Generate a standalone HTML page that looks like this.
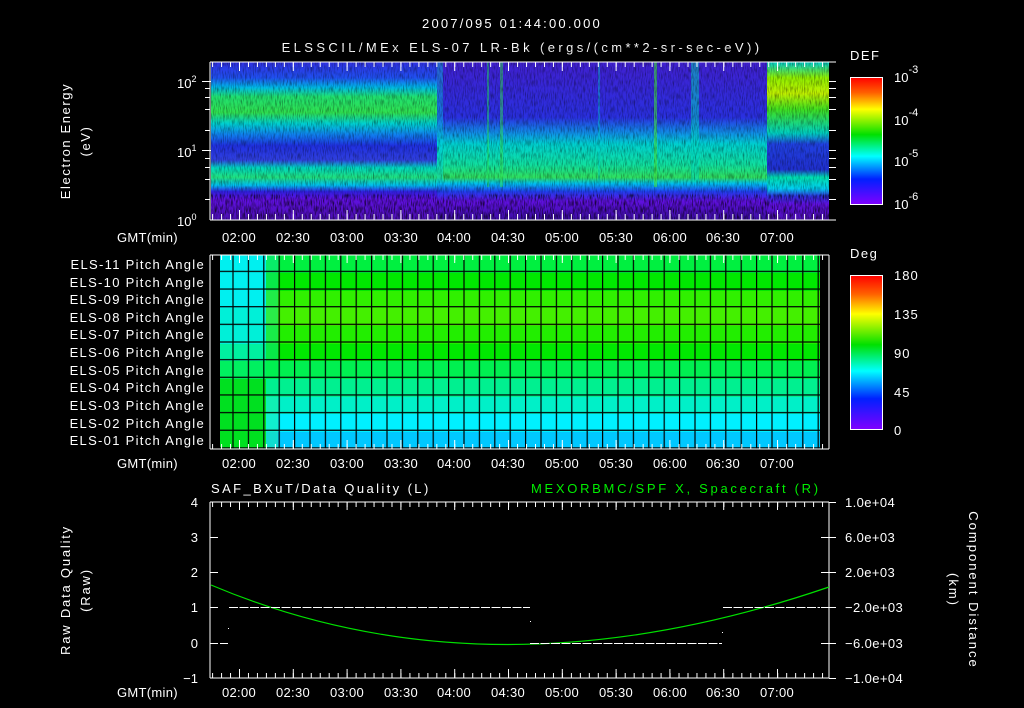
<!DOCTYPE html>
<html><head><meta charset="utf-8"><style>
html,body{margin:0;padding:0;background:#000;}
svg{display:block;}
text{font-family:"Liberation Sans",sans-serif;fill:#fff;font-size:13px;}
.t{font-size:14px;letter-spacing:0.3px;}
.pl{font-size:13px;letter-spacing:1.3px;}
</style></head><body>
<svg width="1024" height="708" viewBox="0 0 1024 708" xmlns="http://www.w3.org/2000/svg">
<defs>
<linearGradient id="gA" x1="0" y1="0" x2="0" y2="1">
<stop offset="0" stop-color="#3030e0"/><stop offset="0.1" stop-color="#2050f0"/>
<stop offset="0.16" stop-color="#00b8e8"/><stop offset="0.22" stop-color="#20e070"/>
<stop offset="0.32" stop-color="#30e050"/><stop offset="0.39" stop-color="#00d0d0"/>
<stop offset="0.46" stop-color="#1080f0"/><stop offset="0.53" stop-color="#2030e0"/>
<stop offset="0.62" stop-color="#3040e0"/><stop offset="0.67" stop-color="#00d8c0"/>
<stop offset="0.73" stop-color="#20e080"/><stop offset="0.78" stop-color="#00c0f0"/>
<stop offset="0.82" stop-color="#3020e0"/><stop offset="0.87" stop-color="#6010e0"/>
<stop offset="1" stop-color="#4a10b0"/></linearGradient>
<linearGradient id="gB" x1="0" y1="0" x2="0" y2="1">
<stop offset="0" stop-color="#4020d0"/><stop offset="0.35" stop-color="#2a30e0"/>
<stop offset="0.45" stop-color="#1090e8"/><stop offset="0.52" stop-color="#00d0d0"/>
<stop offset="0.65" stop-color="#10e0a0"/><stop offset="0.73" stop-color="#30e060"/>
<stop offset="0.77" stop-color="#00c0f0"/><stop offset="0.82" stop-color="#2040f0"/>
<stop offset="0.88" stop-color="#6010e0"/><stop offset="1" stop-color="#3a0ea0"/></linearGradient>
<linearGradient id="gC" x1="0" y1="0" x2="0" y2="1">
<stop offset="0" stop-color="#00d0d0"/><stop offset="0.1" stop-color="#90f000"/>
<stop offset="0.2" stop-color="#c0f000"/><stop offset="0.3" stop-color="#40e020"/>
<stop offset="0.45" stop-color="#00d0c0"/><stop offset="0.52" stop-color="#2040e0"/>
<stop offset="0.68" stop-color="#2030d0"/><stop offset="0.73" stop-color="#00e0b0"/>
<stop offset="0.8" stop-color="#00d0f0"/><stop offset="0.85" stop-color="#3030e0"/>
<stop offset="0.9" stop-color="#6010e0"/><stop offset="1" stop-color="#4a10b0"/></linearGradient>
<linearGradient id="rb" x1="0" y1="0" x2="0" y2="1">
<stop offset="0" stop-color="#ff0000"/><stop offset="0.12" stop-color="#ff6000"/>
<stop offset="0.25" stop-color="#ffff00"/><stop offset="0.45" stop-color="#00e000"/>
<stop offset="0.62" stop-color="#00ffff"/><stop offset="0.8" stop-color="#0020ff"/>
<stop offset="1" stop-color="#8000ff"/></linearGradient>
<pattern id="minT" x="239" y="0" width="8.97" height="708" patternUnits="userSpaceOnUse"><rect x="0" y="0" width="1" height="708" fill="#fff"/></pattern>
<pattern id="majT" x="239" y="0" width="53.8" height="708" patternUnits="userSpaceOnUse"><rect x="0" y="0" width="1" height="708" fill="#fff"/></pattern>
<pattern id="grid" x="220" y="255" width="15.4" height="17.65" patternUnits="userSpaceOnUse"><rect x="12.4" y="0" width="1.2" height="17.65" fill="#000"/><rect x="0" y="15.8" width="15.4" height="1.2" fill="#000"/></pattern>
<filter id="noise"><feTurbulence type="fractalNoise" baseFrequency="0.9 0.15" numOctaves="2" seed="3"/><feColorMatrix values="0 0 0 0 0  0 0 0 0 0  0 0 0 0 0  0 0 0 -2.2 1.25"/></filter>
</defs>

<text x="512" y="28" text-anchor="middle" font-size="16" letter-spacing="2.2">2007/095 01:44:00.000</text>
<text x="522" y="52" text-anchor="middle" font-size="16" letter-spacing="3.4">ELSSCIL/MEx ELS-07 LR-Bk  (ergs/(cm**2-sr-sec-eV))</text>

<!-- Panel 1 -->
<rect x="211" y="62" width="226" height="158" fill="url(#gA)"/>
<rect x="437" y="62" width="330" height="158" fill="url(#gB)"/>
<rect x="767" y="62" width="62" height="158" fill="url(#gC)"/>
<rect x="437" y="62" width="6" height="120" fill="#00d0e0" opacity="0.4"/>
<rect x="487" y="62" width="2" height="125" fill="#20e060" opacity="0.5"/>
<rect x="500" y="62" width="3" height="125" fill="#30e050" opacity="0.5"/>
<rect x="598" y="62" width="2" height="120" fill="#00d0d0" opacity="0.4"/>
<rect x="654" y="62" width="3" height="125" fill="#40e040" opacity="0.6"/>
<rect x="691" y="62" width="8" height="120" fill="#00d8c0" opacity="0.5"/>
<rect x="211" y="62" width="618" height="158" filter="url(#noise)" opacity="0.45"/>
<rect x="211" y="197" width="618" height="23" filter="url(#noise)" opacity="0.6"/>
<rect x="210" y="61.5" width="626" height="1" fill="#fff"/>
<rect x="210" y="219.5" width="626" height="1" fill="#fff"/>
<rect x="209.5" y="62" width="1" height="158" fill="#fff"/>
<rect x="211" y="62" width="618" height="5" fill="url(#minT)"/>
<rect x="211" y="62" width="618" height="9" fill="url(#majT)"/>
<rect x="211" y="214" width="618" height="6" fill="url(#minT)"/>
<rect x="211" y="210" width="618" height="10" fill="url(#majT)"/>
<g fill="#fff">
<rect x="202" y="81" width="9" height="1"/><rect x="202" y="150" width="9" height="1"/>
<rect x="205" y="88" width="5" height="1"/><rect x="205" y="97" width="5" height="1"/><rect x="205" y="109" width="5" height="1"/><rect x="205" y="130" width="5" height="1"/>
<rect x="205" y="158" width="5" height="1"/><rect x="205" y="167" width="5" height="1"/><rect x="205" y="179" width="5" height="1"/><rect x="205" y="199" width="5" height="1"/>
<rect x="829" y="81" width="7" height="1"/><rect x="829" y="88" width="7" height="1"/><rect x="829" y="97" width="7" height="1"/><rect x="829" y="109" width="7" height="1"/><rect x="829" y="130" width="7" height="1"/>
<rect x="829" y="150" width="7" height="1"/><rect x="829" y="158" width="7" height="1"/><rect x="829" y="167" width="7" height="1"/><rect x="829" y="179" width="7" height="1"/><rect x="829" y="199" width="7" height="1"/>
</g>
<text x="177" y="88" font-size="14">10<tspan font-size="9" dy="-6">2</tspan></text>
<text x="177" y="157" font-size="14">10<tspan font-size="9" dy="-6">1</tspan></text>
<text x="177" y="226" font-size="14">10<tspan font-size="9" dy="-6">0</tspan></text>
<text transform="translate(70,141) rotate(-90)" text-anchor="middle" font-size="14" letter-spacing="1.6">Electron Energy</text>
<text transform="translate(90,141) rotate(-90)" text-anchor="middle" font-size="14" letter-spacing="1.6">(eV)</text>
<g class="t">
<text x="117" y="242">GMT(min)</text>
<text x="239" y="242" text-anchor="middle">02:00</text><text x="293" y="242" text-anchor="middle">02:30</text><text x="347" y="242" text-anchor="middle">03:00</text><text x="401" y="242" text-anchor="middle">03:30</text><text x="454" y="242" text-anchor="middle">04:00</text><text x="508" y="242" text-anchor="middle">04:30</text><text x="562" y="242" text-anchor="middle">05:00</text><text x="616" y="242" text-anchor="middle">05:30</text><text x="670" y="242" text-anchor="middle">06:00</text><text x="723" y="242" text-anchor="middle">06:30</text><text x="777" y="242" text-anchor="middle">07:00</text>
</g>
<text x="850" y="60" font-size="15" letter-spacing="1.5">DEF</text>
<rect x="850.5" y="77.5" width="32" height="127" fill="url(#rb)" stroke="#fff" stroke-width="1"/>
<text x="894" y="82" font-size="17">10<tspan font-size="11" dy="-9">-3</tspan></text>
<text x="894" y="125" font-size="17">10<tspan font-size="11" dy="-9">-4</tspan></text>
<text x="894" y="166" font-size="17">10<tspan font-size="11" dy="-9">-5</tspan></text>
<text x="894" y="209" font-size="17">10<tspan font-size="11" dy="-9">-6</tspan></text>

<!-- Panel 2 -->
<g>
<rect x="220" y="255" width="600" height="18" fill="#00f040"/>
<rect x="220" y="273" width="600" height="18" fill="#00e800"/>
<rect x="220" y="291" width="600" height="17" fill="#30f000"/>
<rect x="220" y="308" width="600" height="18" fill="#44f000"/>
<rect x="220" y="326" width="600" height="18" fill="#22ee00"/>
<rect x="220" y="344" width="600" height="17" fill="#00e800"/>
<rect x="220" y="361" width="600" height="18" fill="#00f050"/>
<rect x="220" y="379" width="600" height="18" fill="#00f090"/>
<rect x="220" y="397" width="600" height="17" fill="#00f0c8"/>
<rect x="220" y="414" width="600" height="18" fill="#00f0ff"/>
<rect x="220" y="432" width="600" height="17" fill="#00c8ff"/>
<rect x="220" y="255" width="46" height="54" fill="#00f0f0"/>
<rect x="220" y="308" width="46" height="36" fill="#00f0d8"/>
<rect x="220" y="344" width="46" height="17" fill="#00f0a0"/>
<rect x="220" y="361" width="46" height="18" fill="#00f060"/>
<rect x="220" y="379" width="46" height="70" fill="#00e020"/>
<rect x="266" y="255" width="12" height="106" fill="#10e890" opacity="0.5"/>
<rect x="266" y="397" width="12" height="52" fill="#20f0a0" opacity="0.5"/>
<rect x="220" y="255" width="600" height="194" fill="url(#grid)"/>
</g>
<rect x="210" y="254.5" width="619" height="1" fill="#fff"/>
<rect x="210" y="448.5" width="619" height="1" fill="#fff"/>
<rect x="209.5" y="255" width="1" height="194" fill="#fff"/>
<rect x="828.5" y="255" width="1" height="194" fill="#fff"/>
<rect x="211" y="255" width="617" height="5" fill="url(#minT)"/>
<rect x="211" y="255" width="617" height="8" fill="url(#majT)"/>
<rect x="211" y="444" width="617" height="5" fill="url(#minT)"/>
<rect x="211" y="440" width="617" height="9" fill="url(#majT)"/>
<g text-anchor="end" class="pl">
<text x="205" y="269">ELS-11 Pitch Angle</text><text x="205" y="287">ELS-10 Pitch Angle</text><text x="205" y="304">ELS-09 Pitch Angle</text><text x="205" y="322">ELS-08 Pitch Angle</text><text x="205" y="339">ELS-07 Pitch Angle</text><text x="205" y="357">ELS-06 Pitch Angle</text><text x="205" y="375">ELS-05 Pitch Angle</text><text x="205" y="392">ELS-04 Pitch Angle</text><text x="205" y="410">ELS-03 Pitch Angle</text><text x="205" y="428">ELS-02 Pitch Angle</text><text x="205" y="445">ELS-01 Pitch Angle</text>
</g>
<g class="t">
<text x="117" y="468">GMT(min)</text>
<text x="239" y="468" text-anchor="middle">02:00</text><text x="293" y="468" text-anchor="middle">02:30</text><text x="347" y="468" text-anchor="middle">03:00</text><text x="401" y="468" text-anchor="middle">03:30</text><text x="454" y="468" text-anchor="middle">04:00</text><text x="508" y="468" text-anchor="middle">04:30</text><text x="562" y="468" text-anchor="middle">05:00</text><text x="616" y="468" text-anchor="middle">05:30</text><text x="670" y="468" text-anchor="middle">06:00</text><text x="723" y="468" text-anchor="middle">06:30</text><text x="777" y="468" text-anchor="middle">07:00</text>
</g>
<text x="850" y="258" font-size="15" letter-spacing="1.5">Deg</text>
<rect x="850.5" y="275.5" width="32" height="154" fill="url(#rb)" stroke="#fff" stroke-width="1"/>
<g font-size="16" letter-spacing="1">
<text x="894" y="280">180</text><text x="894" y="319">135</text><text x="894" y="358">90</text><text x="894" y="397">45</text><text x="894" y="435">0</text>
</g>

<!-- Panel 3 -->
<text x="211" y="493" font-size="14" letter-spacing="2.4">SAF_BXuT/Data Quality (L)</text>
<text x="531" y="493" font-size="14" letter-spacing="2.7" style="fill:#00ee00">MEXORBMC/SPF X, Spacecraft (R)</text>
<rect x="210" y="501.5" width="619" height="1" fill="#fff"/>
<rect x="210" y="677.5" width="619" height="1" fill="#fff"/>
<rect x="209.5" y="502" width="1" height="176" fill="#fff"/>
<rect x="828.5" y="502" width="1" height="176" fill="#fff"/>
<rect x="211" y="502" width="617" height="5" fill="url(#minT)"/>
<rect x="211" y="502" width="617" height="8" fill="url(#majT)"/>
<rect x="211" y="673" width="617" height="5" fill="url(#minT)"/>
<rect x="211" y="669" width="617" height="9" fill="url(#majT)"/>
<g fill="#fff">
<rect x="210" y="537" width="8" height="1"/><rect x="210" y="572" width="8" height="1"/><rect x="210" y="607" width="8" height="1"/><rect x="210" y="643" width="8" height="1"/>
<rect x="821" y="537" width="8" height="1"/><rect x="821" y="572" width="8" height="1"/><rect x="821" y="607" width="8" height="1"/><rect x="821" y="643" width="8" height="1"/>
<rect x="829" y="502" width="7" height="1"/><rect x="829" y="537" width="7" height="1"/><rect x="829" y="572" width="7" height="1"/><rect x="829" y="607" width="7" height="1"/><rect x="829" y="643" width="7" height="1"/><rect x="829" y="678" width="7" height="1"/>
</g>
<g font-size="14" text-anchor="end">
<text x="198" y="507">4</text><text x="198" y="542">3</text><text x="198" y="577">2</text><text x="198" y="612">1</text><text x="198" y="648">0</text><text x="198" y="683">−1</text>
</g>
<g font-size="12" letter-spacing="0.4">
<text x="845" y="507">1.0e+04</text><text x="845" y="542">6.0e+03</text><text x="845" y="577">2.0e+03</text><text x="845" y="612">−2.0e+03</text><text x="845" y="648">−6.0e+03</text><text x="845" y="683">−1.0e+04</text>
</g>
<path d="M211,585 Q490,703 829,587" fill="none" stroke="#00e000" stroke-width="1.2"/>
<line x1="229" y1="607.5" x2="530" y2="607.5" stroke="#fff" stroke-dasharray="9,1.5"/>
<line x1="723" y1="607.5" x2="820" y2="607.5" stroke="#fff" stroke-dasharray="9,1.5"/>
<line x1="530" y1="643.5" x2="722" y2="643.5" stroke="#fff" stroke-dasharray="9,1.5"/>
<line x1="220" y1="643.5" x2="228" y2="643.5" stroke="#fff"/>
<rect x="228" y="628" width="1" height="1" fill="#fff"/><rect x="530" y="621" width="1" height="1" fill="#fff"/><rect x="722" y="632" width="1" height="1" fill="#fff"/>
<text transform="translate(70,590) rotate(-90)" text-anchor="middle" font-size="14" letter-spacing="1.8">Raw Data Quality</text>
<text transform="translate(90,590) rotate(-90)" text-anchor="middle" font-size="14" letter-spacing="1.8">(Raw)</text>
<text transform="translate(969,590) rotate(90)" text-anchor="middle" font-size="14" letter-spacing="2">Component Distance</text>
<text transform="translate(949,590) rotate(90)" text-anchor="middle" font-size="14" letter-spacing="2">(km)</text>
<g class="t">
<text x="117" y="697">GMT(min)</text>
<text x="239" y="697" text-anchor="middle">02:00</text><text x="293" y="697" text-anchor="middle">02:30</text><text x="347" y="697" text-anchor="middle">03:00</text><text x="401" y="697" text-anchor="middle">03:30</text><text x="454" y="697" text-anchor="middle">04:00</text><text x="508" y="697" text-anchor="middle">04:30</text><text x="562" y="697" text-anchor="middle">05:00</text><text x="616" y="697" text-anchor="middle">05:30</text><text x="670" y="697" text-anchor="middle">06:00</text><text x="723" y="697" text-anchor="middle">06:30</text><text x="777" y="697" text-anchor="middle">07:00</text>
</g>
</svg>
</body></html>
